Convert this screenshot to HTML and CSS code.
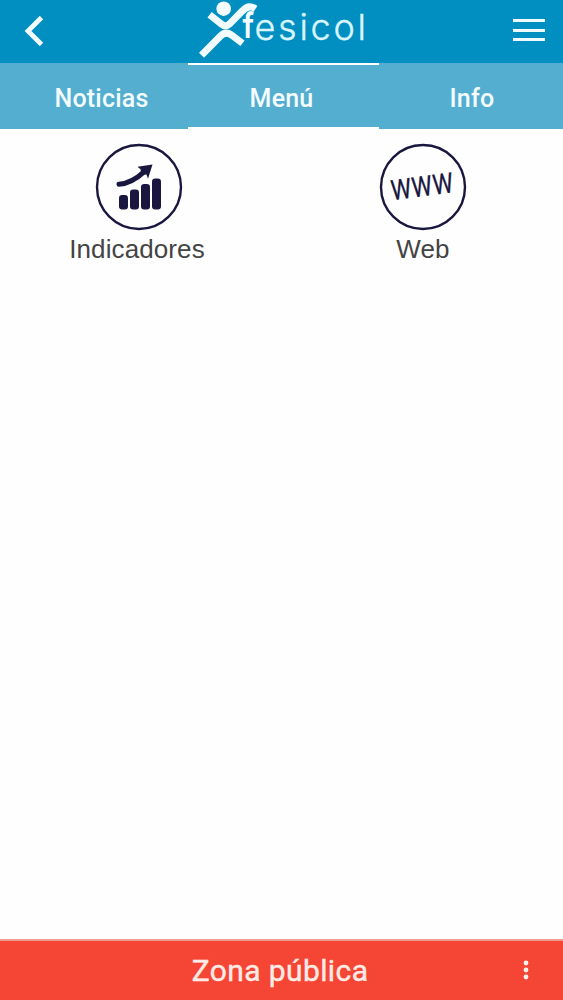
FILE: index.html
```
<!DOCTYPE html>
<html lang="es">
<head>
<meta charset="utf-8">
<title>Fesicol</title>
<link rel="stylesheet" href="styles.css">
</head>
<body>
<div class="app">
  <header class="topbar">
    <svg class="back" viewBox="0 0 20 30"><path d="M17.5 1.5 L4 15 L17.5 28.5"/></svg>
    <svg class="logo" viewBox="188 0 191 63">
      <circle cx="223.7" cy="8.7" r="7.3"/>
      <path class="limb" d="M209.6 14.8 L222 24.5 Q225.7 27.3 229.3 24.2 L242.5 10.8 Q248.5 4.2 255.5 8.8"/>
      <path class="limb" d="M201.5 55.2 L220.5 36 Q225.5 31 231.5 35 L242.5 43.2"/>
      <text class="logo-f" x="242.6" y="38" textLength="11.5" lengthAdjust="spacingAndGlyphs">f</text>
      <text class="logo-text" x="254.5" y="39.5" textLength="111.5">esicol</text>
    </svg>
    <svg class="burger" viewBox="0 0 34 26"><path d="M1 3.5H33M1 13.5H33M1 22.5H33"/></svg>
  </header>
  <nav class="tabs">
    <a class="tab">Noticias</a>
    <a class="tab active">Menú</a>
    <a class="tab">Info</a>
  </nav>
  <main class="grid">
    <a class="item">
      <svg class="icon" viewBox="0 0 88 88">
        <circle class="ring" cx="44" cy="44" r="42"/>
        <rect x="24" y="52" width="9" height="14.5" rx="3.2"/>
        <rect x="35" y="46.5" width="9" height="20" rx="3.2"/>
        <rect x="46" y="41" width="9" height="25.5" rx="3.2"/>
        <rect x="57" y="35.5" width="9" height="31" rx="3.2"/>
        <path class="curve" d="M24 41.3 Q37 40 49 28.8"/>
        <path d="M57.5 21.5 L42.5 23.8 L45.5 26.3 L46.5 31.5 L51.5 31.5 L53 35.8 Z"/>
      </svg>
      <span class="label">Indicadores</span>
    </a>
    <a class="item">
      <svg class="icon" viewBox="0 0 88 88">
        <circle class="ring" cx="44" cy="44" r="42"/>
        <text class="www" transform="translate(13.2 57.3) rotate(-7.5) scale(.82 1)">WWW</text>
      </svg>
      <span class="label">Web</span>
    </a>
  </main>
  <footer class="footer">
    <span class="zone">Zona pública</span>
    <svg class="more" viewBox="0 0 6 22"><circle cx="3" cy="4" r="2.4"/><circle cx="3" cy="11" r="2.4"/><circle cx="3" cy="18" r="2.4"/></svg>
  </footer>
</div>
</body>
</html>
```
FILE: styles.css
```
body { margin: 0; }
.app {
  width: 563px;
  height: 1000px;
  display: flex;
  flex-direction: column;
  background: #fefefe;
  overflow: hidden;
}
.topbar {
  flex: none;
  height: 63px;
  display: grid;
  grid-template-columns: 188px 191px 184px;
  background: #018fc2;
}
.back { width: 20px; height: 30px; margin: 16px 0 0 24px; }
.back path { fill: none; stroke: #f4fbff; stroke-width: 4.8; }
.logo { width: 191px; height: 63px; fill: #f2fcff; }
.limb { fill: none; stroke: #f2fcff; stroke-width: 7; }
.logo-f { font: 600 35px Inter, sans-serif; }
.logo-text { font: 300 36px Inter, sans-serif; fill: #d9f6ff; stroke: #d9f6ff; stroke-width: .4; }
.burger { width: 34px; height: 26px; margin: 17px 0 0 133px; }
.burger path { stroke: #f0fbff; stroke-width: 2.8; }
.tabs {
  flex: none;
  height: 66px;
  display: grid;
  grid-template-columns: 188px 191px 184px;
  background: #53aed0;
}
.tab {
  box-sizing: border-box;
  border: 0 solid #fefefe;
  padding: 21px 0 0 15px;
  text-align: center;
  font: 500 25px/30px Roboto, sans-serif;
  letter-spacing: .2px;
  color: #f4fcff;
}
.tab.active { border-width: 2px 0; padding: 19px 4px 0 0; }
.tab:last-child { padding: 21px 0 0 2px; }
.grid {
  flex: 1;
  display: grid;
  grid-template-columns: 277px 286px;
  align-items: start;
  padding-top: 14px;
}
.item { display: flex; flex-direction: column; align-items: center; }
.item:last-child { padding-left: 6px; }
.icon { width: 88px; height: 88px; fill: #19163f; }
.ring { fill: none; stroke: #19163f; stroke-width: 2.4; }
.curve { fill: none; stroke: #19163f; stroke-width: 5; stroke-linecap: round; }
.www { font: 400 28px Roboto, sans-serif; letter-spacing: .9px; stroke: #19163f; stroke-width: .3; }
.label {
  margin: 3px 3px 0 0;
  font: 26px/30px "Liberation Sans", Arial, sans-serif;
  letter-spacing: .1px;
  color: #444;
}
.item:last-child .label { margin-right: 0; }
.footer {
  flex: none;
  box-sizing: border-box;
  height: 61px;
  border-top: 2px solid #ee9c90;
  display: grid;
  grid-template-columns: 523px 40px;
  background: #f54635;
}
.zone {
  padding: 13px 0 0 37px;
  text-align: center;
  font: 400 30px/34px Roboto, sans-serif;
  letter-spacing: .4px;
  color: #ffebe6;
  -webkit-text-stroke: .4px #ffebe6;
}
.more { width: 6px; height: 22px; margin-top: 18px; fill: #fff0ec; }
```
